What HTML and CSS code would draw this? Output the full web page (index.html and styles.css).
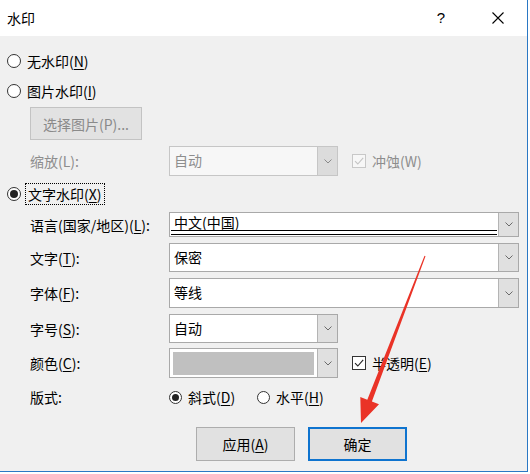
FILE: index.html
```html
<!DOCTYPE html>
<html lang="zh-CN">
<head>
<meta charset="utf-8">
<title>水印</title>
<link rel="stylesheet" href="styles.css">
</head>
<body>
<div class="window">
  <div class="titlebar">
    <span class="title">水印</span>
    <span class="help">?</span>
    <span class="close"><svg width="12" height="12" viewBox="0 0 12 12"><path d="M0.5 0.5L11.5 11.5M11.5 0.5L0.5 11.5" stroke="#000" stroke-width="1.1" fill="none"/></svg></span>
  </div>
  <div class="content">
    <div class="row r-none"><span class="radio"></span><span class="opt">无水印(<u>N</u>)</span></div>
    <div class="row r-pic"><span class="radio"></span><span class="opt">图片水印(<u>I</u>)</span></div>
    <div class="row r-pickbtn"><span class="btn btn-disabled">选择图片(P)...</span></div>
    <div class="row r-scale field">
      <span class="label dim">缩放(L):</span>
      <div class="combo small combo-disabled"><span class="val dim">自动</span><span class="dd"><svg width="8" height="5" viewBox="0 0 8 5"><path d="M0.5 0.5L4 4L7.5 0.5" stroke="#8a8a8a" fill="none"/></svg></span></div>
      <span class="check check-disabled"><svg width="12" height="12" viewBox="0 0 12 12"><path d="M2 6.2L4.8 9L10.2 2.8" stroke="#c4c4c4" stroke-width="1.1" fill="none"/></svg></span>
      <span class="after dim">冲蚀(W)</span>
    </div>
    <div class="row r-text"><span class="radio on"></span><span class="opt focus">文字水印(<u>X</u>)</span></div>
    <div class="row r-lang field">
      <span class="label">语言(国家/地区)(<u>L</u>):</span>
      <div class="combo wide"><span class="val selected"><span class="seltext">中文(中国)</span></span><span class="dd"><svg width="8" height="5" viewBox="0 0 8 5"><path d="M0.5 0.5L4 4L7.5 0.5" stroke="#6a6a6a" fill="none"/></svg></span></div>
    </div>
    <div class="row r-word field">
      <span class="label">文字(<u>T</u>):</span>
      <div class="combo wide"><span class="val">保密</span><span class="dd"><svg width="8" height="5" viewBox="0 0 8 5"><path d="M0.5 0.5L4 4L7.5 0.5" stroke="#6a6a6a" fill="none"/></svg></span></div>
    </div>
    <div class="row r-font field">
      <span class="label">字体(<u>F</u>):</span>
      <div class="combo wide"><span class="val">等线</span><span class="dd"><svg width="8" height="5" viewBox="0 0 8 5"><path d="M0.5 0.5L4 4L7.5 0.5" stroke="#6a6a6a" fill="none"/></svg></span></div>
    </div>
    <div class="row r-size field">
      <span class="label">字号(<u>S</u>):</span>
      <div class="combo small"><span class="val">自动</span><span class="dd"><svg width="8" height="5" viewBox="0 0 8 5"><path d="M0.5 0.5L4 4L7.5 0.5" stroke="#6a6a6a" fill="none"/></svg></span></div>
    </div>
    <div class="row r-color field">
      <span class="label">颜色(<u>C</u>):</span>
      <div class="combo small"><span class="val swatch-wrap"><span class="swatch"></span></span><span class="dd"><svg width="8" height="5" viewBox="0 0 8 5"><path d="M0.5 0.5L4 4L7.5 0.5" stroke="#6a6a6a" fill="none"/></svg></span></div>
      <span class="check"><svg width="12" height="12" viewBox="0 0 12 12"><path d="M2 6.2L4.8 9L10.2 2.8" stroke="#222" stroke-width="1.1" fill="none"/></svg></span>
      <span class="after">半透明(<u>E</u>)</span>
    </div>
    <div class="row r-layout field">
      <span class="label">版式:</span>
      <span class="choice c1"><span class="radio on"></span><span class="opt">斜式(<u>D</u>)</span></span>
      <span class="choice"><span class="radio"></span><span class="opt">水平(<u>H</u>)</span></span>
    </div>
    <div class="row r-buttons">
      <span class="btn">应用(<u>A</u>)</span>
      <span class="btn btn-default">确定</span>
    </div>
  </div>
</div>
<svg class="arrow" width="530" height="474" viewBox="0 0 530 474">
  <polygon points="424.5,255.8 425.5,256.2 371.9,401.5 379,404.2 361,423 360.3,397 367.3,399.7" fill="#ea3327"/>
</svg>
</body>
</html>
```

FILE: styles.css
```css
* {
  box-sizing: border-box;
  margin: 0;
  padding: 0;
}

html, body {
  width: 530px;
  height: 474px;
  overflow: hidden;
  background: #ffffff;
}

body {
  position: relative;
  font-family: "Noto Sans CJK SC", "Noto Sans", sans-serif;
  font-size: 14px;
  line-height: 20px;
  color: #000;
}

u {
  text-decoration: underline;
  text-underline-offset: 2px;
  text-decoration-thickness: 1px;
}

.window {
  width: 528px;
  height: 472px;
  border-right: 1px solid #2a78c4;
  border-bottom: 1px solid #2a78c4;
  display: flex;
  flex-direction: column;
}

.titlebar {
  height: 36px;
  flex: none;
  background: #fff;
  display: flex;
  align-items: center;
  padding-left: 7px;
}

.title {
  flex: 1;
}

.help {
  width: 14px;
  text-align: center;
  font-family: "Liberation Sans", sans-serif;
  font-size: 15px;
  margin-right: 44px;
}

.close {
  width: 12px;
  height: 12px;
  display: flex;
  margin-right: 23px;
}

.content {
  flex: 1;
  background: #f0f0f0;
  display: flex;
  flex-direction: column;
}

.row {
  display: flex;
  align-items: center;
  flex: none;
}

.r-none   { margin-top: 13px; height: 24px; padding-left: 7px; }
.r-pic    { margin-top: 6px;  height: 24px; padding-left: 7px; }
.r-pickbtn{ margin-top: 4px;  height: 33px; padding-left: 30px; }
.r-scale  { margin-top: 6px;  height: 30px; }
.r-text   { margin-top: 7px;  height: 22px; padding-left: 7px; }
.r-lang   { margin-top: 7px;  height: 25px; }
.r-word   { margin-top: 6px;  height: 29px; }
.r-font   { margin-top: 6px;  height: 30px; }
.r-size   { margin-top: 6px;  height: 29px; }
.r-color  { margin-top: 5px;  height: 30px; }
.r-layout { margin-top: 7px;  height: 24px; }
.r-buttons{ margin-top: 18px; height: 34px; padding-left: 196px; gap: 13px; }

.field {
  padding-left: 30px;
}

.label {
  width: 139px;
  flex: none;
}

.dim {
  color: #8d8d8d;
}

.radio {
  width: 14px;
  height: 14px;
  border: 1px solid #333;
  border-radius: 50%;
  background: #fff;
  flex: none;
  display: flex;
  align-items: center;
  justify-content: center;
}

.radio.on::after {
  content: "";
  width: 8px;
  height: 8px;
  border-radius: 50%;
  background: #222;
}

.opt {
  margin-left: 6px;
}

.focus {
  margin-left: 4px;
  padding: 0 2px;
  height: 22px;
  line-height: 20px;
  border: 1px dotted #000;
}

.btn {
  height: 100%;
  width: 99px;
  display: flex;
  align-items: center;
  justify-content: center;
  background: #e1e1e1;
  border: 1px solid #adadad;
}

.btn-disabled {
  width: 112px;
  background: #e2e2e2;
  border-color: #c3c3c3;
  color: #8a8a8a;
}

.btn-default {
  border: 2px solid #0f74cf;
}

.combo {
  height: 100%;
  display: flex;
  border: 1px solid #a9a9a9;
  background: #fff;
  flex: none;
}

.combo.small {
  width: 169px;
}

.combo.wide {
  width: 350px;
}

.combo-disabled {
  background: #f7f7f7;
  border-color: #c6c6c6;
}

.val {
  flex: 1;
  padding-left: 4px;
  display: flex;
  align-items: center;
  padding-bottom: 2px;
}

.val.selected {
  position: relative;
  margin-right: 1px;
  align-items: flex-start;
  padding-bottom: 0;
}

.seltext {
  line-height: 18px;
}

.val.selected::after {
  content: "";
  position: absolute;
  left: 1px;
  right: 0;
  bottom: 1px;
  height: 3px;
  border-top: 1px solid #000;
  border-bottom: 1px solid #000;
}

.swatch-wrap {
  padding: 3px 3px 2px 3px;
  align-items: stretch;
}

.swatch {
  flex: 1;
  background: #c0c0c0;
}

.dd {
  width: 20px;
  flex: none;
  background: #e0e0e0;
  border-left: 1px solid #b4b4b4;
  display: flex;
  align-items: center;
  justify-content: center;
}

.combo-disabled .dd {
  background: #dcdcdc;
  border-left-color: #c6c6c6;
}

.check {
  width: 14px;
  height: 14px;
  margin-left: 14px;
  border: 1px solid #333;
  background: #fff;
  display: flex;
  align-items: center;
  justify-content: center;
  flex: none;
}

.check-disabled {
  border-color: #c8c8c8;
  background: #f7f7f7;
}

.after {
  margin-left: 6px;
}

.choice {
  display: flex;
  align-items: center;
}

.choice .radio {
  width: 13px;
  height: 13px;
}

.choice .radio.on::after {
  width: 7px;
  height: 7px;
}

.choice .opt {
  margin-left: 6px;
}

.c1 {
  width: 88px;
}

.arrow {
  position: absolute;
  left: 0;
  top: 0;
  pointer-events: none;
}
```
